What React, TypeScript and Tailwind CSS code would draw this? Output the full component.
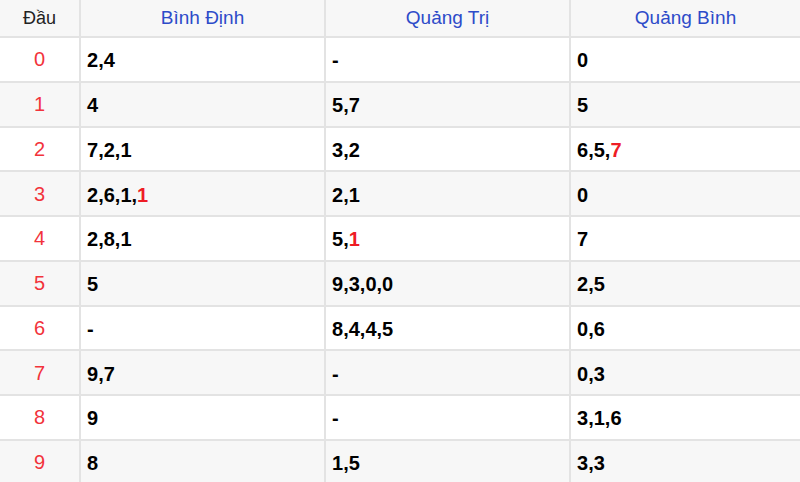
const provinces = ['Bình Định', 'Quảng Trị', 'Quảng Bình']

// each cell: list of digits, last one may be flagged red
type Cell = { v: string[]; hot?: boolean }

const rows: Cell[][] = [
  [{ v: ['2', '4'] }, { v: ['-'] }, { v: ['0'] }],
  [{ v: ['4'] }, { v: ['5', '7'] }, { v: ['5'] }],
  [{ v: ['7', '2', '1'] }, { v: ['3', '2'] }, { v: ['6', '5', '7'], hot: true }],
  [{ v: ['2', '6', '1', '1'], hot: true }, { v: ['2', '1'] }, { v: ['0'] }],
  [{ v: ['2', '8', '1'] }, { v: ['5', '1'], hot: true }, { v: ['7'] }],
  [{ v: ['5'] }, { v: ['9', '3', '0', '0'] }, { v: ['2', '5'] }],
  [{ v: ['-'] }, { v: ['8', '4', '4', '5'] }, { v: ['0', '6'] }],
  [{ v: ['9', '7'] }, { v: ['-'] }, { v: ['0', '3'] }],
  [{ v: ['9'] }, { v: ['-'] }, { v: ['3', '1', '6'] }],
  [{ v: ['8'] }, { v: ['1', '5'] }, { v: ['3', '3'] }],
]

function Digits({ cell }: { cell: Cell }) {
  const last = cell.v.length - 1
  return (
    <>
      {cell.v.map((d, i) => (
        <span key={i}>
          {i > 0 && ','}
          <span className={cell.hot && i === last ? 'text-[#ee1c25]' : ''}>{d}</span>
        </span>
      ))}
    </>
  )
}

export default function App() {
  return (
    <div
      className="w-[800px] h-[482px] overflow-hidden bg-white"
      style={{ fontFamily: '"Liberation Sans", Arial, sans-serif' }}
    >
      {/* Header */}
      <div className="grid grid-cols-[81px_245px_245px_1fr] h-[38px] bg-[#f7f7f7] border-b-2 border-[#e3e3e3]">
        <div className="flex items-center justify-center border-r-2 border-[#e3e3e3] text-[18px] text-[#222]">
          Đầu
        </div>
        {provinces.map((p, i) => (
          <div
            key={p}
            className={`flex items-center justify-center text-[19px] text-[#2d4bc9] ${
              i < 2 ? 'border-r-2 border-[#e3e3e3]' : ''
            }`}
          >
            {p}
          </div>
        ))}
      </div>

      {rows.map((r, idx) => (
        <div
          key={idx}
          className={`grid grid-cols-[81px_245px_245px_1fr] h-[44.75px] border-b-2 border-[#e3e3e3] ${
            idx % 2 === 1 ? 'bg-[#f7f7f7]' : 'bg-white'
          }`}
        >
          <div className="flex items-center justify-center border-r-2 border-[#e3e3e3] text-[20px] text-[#f2333b]">
            {idx}
          </div>
          {r.map((c, i) => (
            <div
              key={i}
              className={`flex items-center pl-[6px] pt-[2px] text-[20px] font-bold text-black ${
                i < 2 ? 'border-r-2 border-[#e3e3e3]' : ''
              }`}
            >
              <Digits cell={c} />
            </div>
          ))}
        </div>
      ))}
    </div>
  )
}
